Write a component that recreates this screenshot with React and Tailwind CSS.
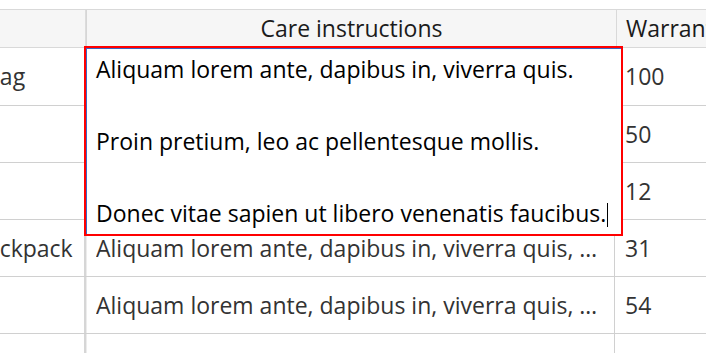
import React from "react";

const LONG = "Aliquam lorem ante, dapibus in, viverra quis, feugiat a, tellus.";

const rows = [
  { name: "Bag", shift: "-ml-[15px]", care: LONG, warranty: "100", h: "h-[58px]" },
  { name: "", shift: "", care: LONG, warranty: "50", h: "h-[57px]" },
  { name: "", shift: "", care: LONG, warranty: "12", h: "h-[57px]" },
  { name: "Backpack", shift: "-ml-[28px]", care: LONG, warranty: "31", h: "h-[57px]" },
  { name: "", shift: "", care: LONG, warranty: "54", h: "h-[57px]" },
  { name: "", shift: "", care: LONG, warranty: "22", h: "h-[57px]" },
];

const GridRow = ({ row }) => {
  return (
    <div className={`flex border-b border-[#d0d0d0] ${row.h}`}>
      <div className="flex w-[86px] shrink-0 items-center overflow-hidden border-r-2 border-[#d6d6d6]">
        <span className={`whitespace-nowrap text-[#333] ${row.shift}`}>{row.name}</span>
      </div>
      <div className="flex w-[529px] shrink-0 items-center border-x border-l-[#ececec] border-r-[#d0d0d0] pl-[9px] pr-[14px]">
        <span className="truncate text-[#333]">{row.care}</span>
      </div>
      <div className="flex flex-1 items-center pl-[10px]">
        <span className="text-[#333]">{row.warranty}</span>
      </div>
    </div>
  );
};

const EditBox = () => {
  return (
    <div className="absolute left-[84px] top-[46px] h-[190px] w-[539px] border-2 border-[#ff0000] bg-white">
      <div className="h-full border-l border-t border-[#3a66c4] pl-[9px] pt-[2px] text-black">
        <p className="leading-[36px]">Aliquam lorem ante, dapibus in, viverra quis.</p>
        <p className="mt-[36px] leading-[36px]">Proin pretium, leo ac pellentesque mollis.</p>
        <p className="mt-[36px] leading-[36px]">
          Donec vitae sapien ut libero venenatis faucibus.
          <span className="ml-[1px] inline-block h-[24px] w-px translate-y-[5px] bg-black" />
        </p>
      </div>
    </div>
  );
};

export default function App() {
  return (
    <div
      className="relative h-[353px] w-[706px] overflow-hidden bg-white text-[23px]"
      style={{ fontFamily: '"Open Sans", "Noto Sans", sans-serif' }}
    >
      <div className="h-[9px]" />
      <div className="flex h-[39px] border-y border-[#d9d9d9] bg-[#f6f6f6]">
        <div className="w-[86px] shrink-0 border-r border-[#dcdcdc]" />
        <div className="flex w-[531px] shrink-0 items-center justify-center border-x border-l-[#d6d6d6] border-r-[#d9d9d9] text-[#1b1b1b]">
          Care instructions
        </div>
        <div className="flex flex-1 items-center overflow-hidden whitespace-nowrap pl-[9px] text-[#1b1b1b]">
          Warranty (months)
        </div>
      </div>
      {rows.map((row, i) => (
        <GridRow key={i} row={row} />
      ))}
      <EditBox />
    </div>
  );
}
